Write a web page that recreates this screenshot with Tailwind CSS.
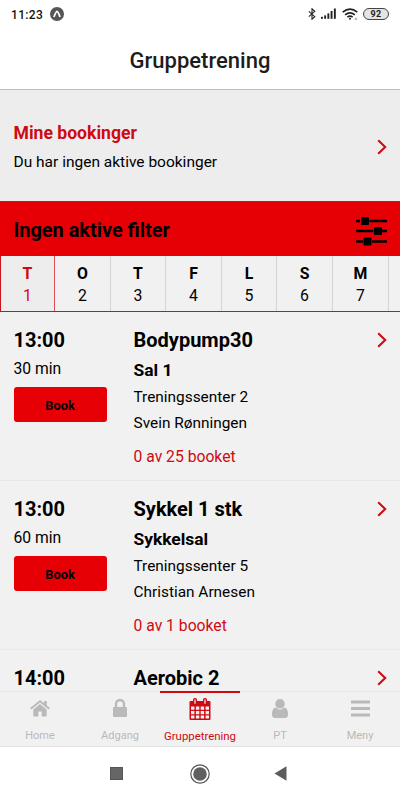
<!DOCTYPE html>
<html lang="no">
<head>
  <meta charset="UTF-8" />
  <meta name="viewport" content="width=device-width, initial-scale=1.0"/>
  <title>Gruppetrening</title>
  <script src="https://cdn.jsdelivr.net/npm/@tailwindcss/browser@4"></script>
</head>
<body class="bg-white text-black font-[Roboto,sans-serif]">

  <div class="w-[400px] h-[800px] flex flex-col overflow-hidden">

    <!-- Status bar -->
    <div class="h-[30px] shrink-0 flex items-center justify-between px-[11px]">
      <div class="flex items-center gap-[6px] -mt-px">
        <span class="w-[33px] text-[12px] font-medium leading-none tracking-[0.35px] text-[#111] whitespace-nowrap">11:23</span>
        <svg class="w-[14px] h-[14px] -mt-px" viewBox="0 0 14 14">
          <circle cx="7" cy="7" r="7" fill="#555"/>
          <path d="M3.9 10 Q6 4.6 7 4.4 Q8 4.6 10.1 10" fill="none" stroke="#fff" stroke-width="1.7"/>
        </svg>
      </div>
      <div class="flex items-center -mt-[3px]">
        <svg class="w-[8px] h-[12px] mr-[5px]" viewBox="0 0 8 12" fill="none" stroke="#222" stroke-width="1.1">
          <path d="M0.8 3.3 L6.8 8.7 L4 11.2 V0.8 L6.8 3.3 L0.8 8.7"/>
        </svg>
        <svg class="w-[15px] h-[11px] mr-[6px]" viewBox="0 0 15 11" fill="#222">
          <rect x="0" y="8.8" width="1.9" height="2"/>
          <rect x="3.2" y="7.4" width="1.9" height="3.4"/>
          <rect x="6.4" y="5.4" width="1.9" height="5.4"/>
          <rect x="9.6" y="3" width="1.9" height="7.8"/>
          <rect x="12.9" y="0.5" width="1.9" height="10.3"/>
        </svg>
        <svg class="w-[16px] h-[12px] mr-[5px]" viewBox="0 0 16 12" fill="none" stroke="#222" stroke-width="1.6">
          <path d="M0.7 4.2 Q8 -1.9 15.3 4.2"/>
          <path d="M3.1 6.8 Q8 2.8 12.9 6.8"/>
          <path d="M5.4 9.1 Q8 7 10.6 9.1"/>
          <circle cx="8" cy="10.7" r="1" fill="#222" stroke="none"/>
          <path d="M12.7 10.2 H15.2 M12.7 11.4 H15.2" stroke="#888" stroke-width="0.7"/>
        </svg>
        <div class="w-[26px] h-[12px] pt-px rounded-full border border-[#444] bg-[#e4e4e4] flex items-center justify-center text-[9px] font-bold leading-none tracking-[0.4px] text-[#222]">92</div>
      </div>
    </div>

    <!-- Header -->
    <div class="h-[60px] shrink-0 flex items-center justify-center pt-[2px] border-b border-[#bcbcbc] text-[22px] font-medium text-[#1c1c1c]">Gruppetrening</div>

    <!-- My bookings -->
    <div class="h-[111px] shrink-0 flex items-center justify-between bg-[#ededed] pl-[13.5px] pr-[13px]">
      <div class="pt-[4px]">
        <h2 class="text-[17.6px] leading-[28px] font-bold text-[#ce0a12]">Mine bookinger</h2>
        <p class="text-[15.5px] leading-[30px]">Du har ingen aktive bookinger</p>
      </div>
      <svg class="w-[10px] h-[16px] mt-[3px]" viewBox="0 0 10 16" fill="none" stroke="#ce0a12" stroke-width="2.1"><path d="M1.2 1.2 L8.2 8 L1.2 14.8"/></svg>
    </div>

    <!-- Filter -->
    <div class="h-[55px] shrink-0 flex items-center justify-between bg-[#e60006] border-t border-[#cf1519] pl-[13.5px] pr-[13px]">
      <h2 class="text-[19.9px] font-bold pt-[4px]">Ingen aktive filter</h2>
      <svg class="w-[31px] h-[29px] mt-[4px]" viewBox="0 0 31 29">
        <path d="M0 4 H4 M13.5 4 H31 M0 14 H17.5 M26 14 H31 M0 24.5 H7 M16 24.5 H31" stroke="#000" stroke-width="2.6"/>
        <rect x="5" y="0" width="8" height="8" rx="1" fill="#000"/>
        <rect x="18" y="10" width="8" height="8" rx="1" fill="#000"/>
        <rect x="7.5" y="20.5" width="8" height="8" rx="1" fill="#000"/>
      </svg>
    </div>

    <!-- Days -->
    <div class="h-[56px] shrink-0 flex bg-[#f1f1f1] border-b border-[#c8141a] text-center text-[15.8px] leading-[22px]">
      <div class="w-[55px] shrink-0 pt-[7px] bg-[#ededed] border-l border-r border-l-[#c8141a] border-r-[#df5055] text-[#ce0a12]"><b>T</b><p>1</p></div>
      <div class="w-[56px] shrink-0 pt-[7px] border-r border-[#d4d4d4]"><b>O</b><p>2</p></div>
      <div class="w-[55px] shrink-0 pt-[7px] border-r border-[#d4d4d4]"><b>T</b><p>3</p></div>
      <div class="w-[56px] shrink-0 pt-[7px] border-r border-[#d4d4d4]"><b>F</b><p>4</p></div>
      <div class="w-[55px] shrink-0 pt-[7px] border-r border-[#d4d4d4]"><b>L</b><p>5</p></div>
      <div class="w-[56px] shrink-0 pt-[7px] border-r border-[#d4d4d4]"><b>S</b><p>6</p></div>
      <div class="w-[56px] shrink-0 pt-[7px] border-r border-[#d4d4d4]"><b>M</b><p>7</p></div>
    </div>

    <!-- Classes -->
    <div class="h-[379px] shrink-0 overflow-hidden bg-[#f1f1f1]">
      <div class="h-[169px] flex pt-[14px] pl-[13.5px] pr-[13px] border-b border-[#e8e8e8]">
        <div class="w-[120px]">
          <h3 class="text-[20px] leading-[28px] font-bold">13:00</h3>
          <p class="text-[15.7px] leading-[30px]">30 min</p>
          <button class="block w-[93px] h-[35px] mt-[3px] pt-[3px] rounded-[3px] bg-[#e60006] text-[12.8px] font-bold">Book</button>
        </div>
        <div class="flex-1">
          <h3 class="text-[20px] leading-[28px] font-bold">Bodypump30</h3>
          <h4 class="pt-px text-[17.4px] leading-[31px] font-bold">Sal 1</h4>
          <p class="-mt-px text-[15.4px] leading-[25px]">Treningssenter 2</p>
          <p class="text-[15.4px] leading-[26px]">Svein Rønningen</p>
          <p class="mt-[8px] text-[15.7px] leading-[26px] text-[#ce0a12]">0 av 25 booket</p>
        </div>
        <svg class="w-[10px] h-[16px] mt-[6px]" viewBox="0 0 10 16" fill="none" stroke="#ce0a12" stroke-width="2.1"><path d="M1.2 1.2 L8.2 8 L1.2 14.8"/></svg>
      </div>

      <div class="h-[169px] flex pt-[14px] pl-[13.5px] pr-[13px] border-b border-[#e8e8e8]">
        <div class="w-[120px]">
          <h3 class="text-[20px] leading-[28px] font-bold">13:00</h3>
          <p class="text-[15.7px] leading-[30px]">60 min</p>
          <button class="block w-[93px] h-[35px] mt-[3px] pt-[3px] rounded-[3px] bg-[#e60006] text-[12.8px] font-bold">Book</button>
        </div>
        <div class="flex-1">
          <h3 class="text-[20px] leading-[28px] font-bold">Sykkel 1 stk</h3>
          <h4 class="pt-px text-[17.4px] leading-[31px] font-bold">Sykkelsal</h4>
          <p class="-mt-px text-[15.4px] leading-[25px]">Treningssenter 5</p>
          <p class="text-[15.4px] leading-[26px]">Christian Arnesen</p>
          <p class="mt-[8px] text-[15.7px] leading-[26px] text-[#ce0a12]">0 av 1 booket</p>
        </div>
        <svg class="w-[10px] h-[16px] mt-[6px]" viewBox="0 0 10 16" fill="none" stroke="#ce0a12" stroke-width="2.1"><path d="M1.2 1.2 L8.2 8 L1.2 14.8"/></svg>
      </div>

      <div class="flex pt-[14px] pl-[13.5px] pr-[13px]">
        <h3 class="w-[120px] text-[20px] leading-[28px] font-bold">14:00</h3>
        <h3 class="flex-1 text-[20px] leading-[28px] font-bold">Aerobic 2</h3>
        <svg class="w-[10px] h-[16px] mt-[6px]" viewBox="0 0 10 16" fill="none" stroke="#ce0a12" stroke-width="2.1"><path d="M1.2 1.2 L8.2 8 L1.2 14.8"/></svg>
      </div>
    </div>

    <!-- Tab bar -->
    <div class="h-[56px] shrink-0 grid grid-cols-5 bg-[#f1f1f1] border-b border-[#e2e2e2] text-[11px] leading-[14px] text-center text-[#b9b9b9]">
      <div class="flex flex-col items-center border-t border-[#e6e6e6]">
        <svg class="w-[20px] h-[17px] mt-[8px] mb-[12px]" viewBox="0 0 20 17" fill="#b9b9b9">
          <path d="M3.3 9.6 L10 4 L16.7 9.6 V15.6 Q16.7 16.5 15.8 16.5 H11.7 V11.5 H8.3 V16.5 H4.2 Q3.3 16.5 3.3 15.6 Z"/>
          <path d="M0.8 8.7 L10 1.2 L19.2 8.7" fill="none" stroke="#b9b9b9" stroke-width="1.8"/>
          <rect x="14" y="1" width="2.8" height="5"/>
        </svg>
        <span>Home</span>
      </div>
      <div class="flex flex-col items-center border-t border-[#e6e6e6]">
        <svg class="w-[14px] h-[18px] mt-[7px] mb-[12px]" viewBox="0 0 14 18">
          <rect x="0" y="8" width="14" height="10" rx="1" fill="#b9b9b9"/>
          <path d="M3 9 V5 A4 4 0 0 1 11 5 V9" fill="none" stroke="#b9b9b9" stroke-width="2.3"/>
        </svg>
        <span>Adgang</span>
      </div>
      <div class="flex flex-col items-center border-t-2 border-[#ce0a12] text-[#ce0a12]">
        <svg class="w-[22px] h-[23px] mt-[5px] mb-[8px]" viewBox="0 0 22 23">
          <rect x="0.5" y="3" width="21" height="19" rx="1" fill="#ce0a12"/>
          <rect x="4" y="0" width="4" height="7" rx="1.8" fill="#ce0a12"/>
          <rect x="14" y="0" width="4" height="7" rx="1.8" fill="#ce0a12"/>
          <path d="M6 1.5 V5.8 M16 1.5 V5.8" stroke="#f1f1f1" stroke-width="1.2"/>
          <path d="M2 8.5 h3.4 v3.2 H2z M6.9 8.5 h3.4 v3.2 H6.9z M11.7 8.5 h3.4 v3.2 h-3.4z M16.6 8.5 h3.4 v3.2 h-3.4z M2 12.9 h3.4 v3.4 H2z M6.9 12.9 h3.4 v3.4 H6.9z M11.7 12.9 h3.4 v3.4 h-3.4z M16.6 12.9 h3.4 v3.4 h-3.4z M2 17.5 h3.4 v3 H2z M6.9 17.5 h3.4 v3 H6.9z M11.7 17.5 h3.4 v3 h-3.4z M16.6 17.5 h3.4 v3 h-3.4z" fill="#f1f1f1"/>
        </svg>
        <span class="text-[11.4px]">Gruppetrening</span>
      </div>
      <div class="flex flex-col items-center border-t border-[#e6e6e6]">
        <svg class="w-[16px] h-[19px] mt-[7px] mb-[11px]" viewBox="0 0 16 19" fill="#b9b9b9">
          <path d="M3.8 8.6 Q5.5 10.7 8 10.7 Q10.5 10.7 12.2 8.6 Q16 9 16 15.6 Q16 19 13 19 H3 Q0 19 0 15.6 Q0 9 3.8 8.6 Z"/>
          <circle cx="8" cy="4.8" r="4.8"/>
        </svg>
        <span>PT</span>
      </div>
      <div class="flex flex-col items-center border-t border-[#e6e6e6]">
        <svg class="w-[19px] h-[17px] mt-[8px] mb-[12px]" viewBox="0 0 19 17" fill="#b9b9b9">
          <rect x="0" y="0.5" width="19" height="3" rx="0.5"/>
          <rect x="0" y="7" width="19" height="3" rx="0.5"/>
          <rect x="0" y="13.5" width="19" height="3" rx="0.5"/>
        </svg>
        <span>Meny</span>
      </div>
    </div>

    <!-- Android navigation -->
    <div class="h-[53px] shrink-0 flex items-center justify-center pr-[5px]">
      <div class="w-[82px] flex justify-center"><div class="w-[13px] h-[13px] bg-[#666] border border-[#555]"></div></div>
      <div class="w-[84px] flex justify-center">
        <svg class="w-[20px] h-[20px]" viewBox="0 0 20 20">
          <circle cx="10" cy="10" r="9.2" fill="none" stroke="#555" stroke-width="1.2"/>
          <circle cx="10" cy="10" r="6.8" fill="#606060"/>
        </svg>
      </div>
      <div class="w-[78px] flex justify-center">
        <svg class="w-[13px] h-[15px]" viewBox="0 0 13 15"><path d="M0.5 7.5 L12.5 0.3 V14.7 Z" fill="#5c5c5c"/></svg>
      </div>
    </div>

  </div>
</body>
</html>
